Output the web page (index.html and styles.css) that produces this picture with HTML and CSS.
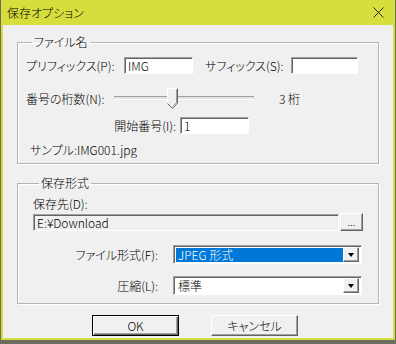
FILE: index.html
```html
<!DOCTYPE html>
<html lang="ja">
<head>
  <meta charset="UTF-8" />
  <title>保存オプション</title>
  <link rel="stylesheet" href="styles.css">
</head>
<body>

  <div class="window">
    <div class="titlebar">
      <span class="title">保存オプション</span>
      <svg class="close" width="11" height="11" viewBox="0 0 11 11">
        <path d="M0.5 0.5 L10.5 10.5 M10.5 0.5 L0.5 10.5" stroke="#222" stroke-width="1" fill="none"/>
      </svg>
    </div>

    <div class="content">
      <fieldset class="group group-file">
        <legend>ファイル名</legend>

        <div class="row row-affix">
          <label class="lbl lbl-prefix">プリフィックス(P):</label>
          <input class="edit edit-prefix" type="text" value="IMG">
          <label class="lbl lbl-suffix">サフィックス(S):</label>
          <input class="edit edit-suffix" type="text" value="">
        </div>

        <div class="row row-digits">
          <label class="lbl lbl-digits">番号の桁数(N):</label>
          <div class="slider">
            <div class="track"></div>
            <svg class="thumb" width="11" height="21" viewBox="0 0 11 21">
              <path d="M0.5 15 V0.5 H10.5 V15 L5.5 20.5 Z" fill="#f0f0f0"/>
              <path d="M0.5 15 V0.5 H10" stroke="#fff" fill="none"/>
              <path d="M10.5 0.5 V15 L5.5 20.5 L0.5 15.5" stroke="#646464" fill="none"/>
              <path d="M9.5 1.5 V14.6 L5.5 19" stroke="#a0a0a0" fill="none"/>
            </svg>
          </div>
          <span class="digits-value">3 桁</span>
        </div>

        <div class="row row-start">
          <label class="lbl lbl-start">開始番号(I):</label>
          <input class="edit edit-start" type="text" value="1">
        </div>

        <p class="sample">サンプル:IMG001.jpg</p>
      </fieldset>

      <fieldset class="group group-format">
        <legend>保存形式</legend>

        <p class="dest-label">保存先(D):</p>
        <div class="row row-dest">
          <input class="edit edit-dest" type="text" value="E:¥Download" readonly>
          <button class="btn btn-browse">...</button>
        </div>

        <div class="row row-combo row-type">
          <label class="lbl lbl-combo">ファイル形式(F):</label>
          <div class="combo">
            <span class="combo-text selected">JPEG 形式</span>
            <span class="combo-arrow"></span>
          </div>
        </div>

        <div class="row row-combo row-quality">
          <label class="lbl lbl-combo">圧縮(L):</label>
          <div class="combo">
            <span class="combo-text">標準</span>
            <span class="combo-arrow"></span>
          </div>
        </div>
      </fieldset>

      <div class="actions">
        <button class="btn btn-action btn-default">OK</button>
        <button class="btn btn-action">キャンセル</button>
      </div>
    </div>
  </div>

</body>
</html>
```

FILE: styles.css
```css
/* classic dialog palette */
:root {
  --face: #f0f0f0;
  --frame: #d6de3e;
  --light: #ffffff;
  --shadow: #a0a0a0;
  --dark-shadow: #646464;
  --select: #0078d7;
}

body {
  margin: 0;
  height: 344px;
  overflow: hidden;
  background: #6c6c60;
  font-family: "Noto Sans CJK JP", "Noto Sans", sans-serif;
  font-size: 12px;
  font-weight: 300;
  font-feature-settings: "palt";
  color: #000;
}

.window {
  width: 390px;
  margin-left: 1px;
  border: 2px solid var(--frame);
  border-top: 0;
  background: var(--face);
}

.titlebar {
  height: 25px;
  display: flex;
  align-items: center;
  justify-content: space-between;
  padding: 0 9px 0 4px;
  background: var(--frame);
}

.title {
  font-size: 12px;
  line-height: 14px;
}

.content {
  height: 313px;
  padding: 0 14px 0 14px;
  box-sizing: border-box;
  overflow: hidden;
}

/* group boxes */
.group {
  margin: 10px 0 0;
  padding: 0 8px 6px 8px;
  border: 1px solid #b4b4b4;
  box-shadow: inset 1px 1px 0 var(--light), 1px 1px 0 var(--light);
}

.group legend {
  padding: 0 2px;
  margin-left: 6px;
  line-height: 14px;
}

.group-format {
  margin-top: 12px;
  padding: 0 15px 8px 15px;
}

.row {
  display: flex;
  align-items: center;
}

.lbl {
  line-height: 14px;
  white-space: nowrap;
}

/* inputs */
.edit {
  box-sizing: border-box;
  height: 17px;
  margin: 0;
  padding: 0 3px;
  font: inherit;
  font-size: 12px;
  line-height: 13px;
  background: var(--light);
  border: 1px solid;
  border-color: var(--shadow) var(--light) var(--light) var(--shadow);
  box-shadow: inset 1px 1px 0 var(--dark-shadow);
  outline: none;
}

.row-affix {
  margin-top: 8px;
}

.lbl-prefix {
  width: 98px;
}

.edit-prefix {
  width: 69px;
}

.lbl-suffix {
  width: 86px;
  margin-left: 12px;
}

.edit-suffix {
  width: 67px;
}

/* slider */
.row-digits {
  margin-top: 14px;
  height: 21px;
}

.lbl-digits {
  width: 88px;
}

.slider {
  position: relative;
  width: 140px;
  height: 21px;
}

.track {
  margin-top: 8px;
  height: 2px;
  border-top: 1px solid var(--shadow);
  border-bottom: 1px solid var(--light);
  background: #e3e3e3;
}

.thumb {
  position: absolute;
  left: 53px;
  top: 0;
}

.digits-value {
  margin-left: 25px;
  line-height: 14px;
}

.row-start {
  margin-top: 8px;
}

.lbl-start {
  width: 150px;
  padding-right: 4px;
  text-align: right;
}

.edit-start {
  width: 69px;
}

.sample {
  margin: 9px 0 0 4px;
  line-height: 14px;
}

/* save format */
.dest-label {
  margin: 7px 0 0 0;
  line-height: 14px;
}

.row-dest {
  margin-top: 2px;
  height: 18px;
}

.edit-dest {
  width: 306px;
  background: var(--face);
}

.btn {
  margin: 0;
  padding: 0;
  font: inherit;
  font-size: 12px;
  color: #000;
  background: var(--face);
  border: 1px solid;
  border-color: var(--light) var(--dark-shadow) var(--dark-shadow) var(--light);
  box-shadow: inset -1px -1px 0 var(--shadow);
  box-sizing: border-box;
}

.btn-browse {
  width: 23px;
  height: 18px;
  margin-left: 1px;
  line-height: 10px;
  font-size: 10px;
}

.row-combo {
  height: 19px;
}

.row-type {
  margin-top: 14px;
}

.row-quality {
  margin-top: 12px;
}

.lbl-combo {
  width: 125px;
  padding-right: 15px;
  text-align: right;
}

.combo {
  display: flex;
  align-items: center;
  width: 189px;
  height: 19px;
  box-sizing: border-box;
  padding: 2px;
  background: var(--light);
  border: 1px solid;
  border-color: var(--shadow) var(--light) var(--light) var(--shadow);
  box-shadow: inset 1px 1px 0 var(--dark-shadow);
}

.combo-text {
  flex: 1;
  height: 14px;
  padding-left: 2px;
  line-height: 14px;
}

.combo-text.selected {
  background: var(--select);
  color: var(--light);
}

.combo-arrow {
  position: relative;
  width: 16px;
  height: 15px;
  box-sizing: border-box;
  background: var(--face);
  border: 1px solid;
  border-color: var(--light) var(--dark-shadow) var(--dark-shadow) var(--light);
  box-shadow: inset -1px -1px 0 var(--shadow);
}

.combo-arrow::after {
  content: "";
  position: absolute;
  left: 4px;
  top: 5px;
  border-left: 3.5px solid transparent;
  border-right: 3.5px solid transparent;
  border-top: 4px solid #000;
}

/* buttons */
.actions {
  display: flex;
  gap: 32px;
  margin-top: 11px;
  padding-left: 75px;
}

.btn-action {
  width: 87px;
  height: 21px;
  line-height: 17px;
}

.btn-default {
  border-color: #000;
  box-shadow: inset 1px 1px 0 var(--light), inset -1px -1px 0 var(--dark-shadow), inset -2px -2px 0 var(--shadow);
}
```
